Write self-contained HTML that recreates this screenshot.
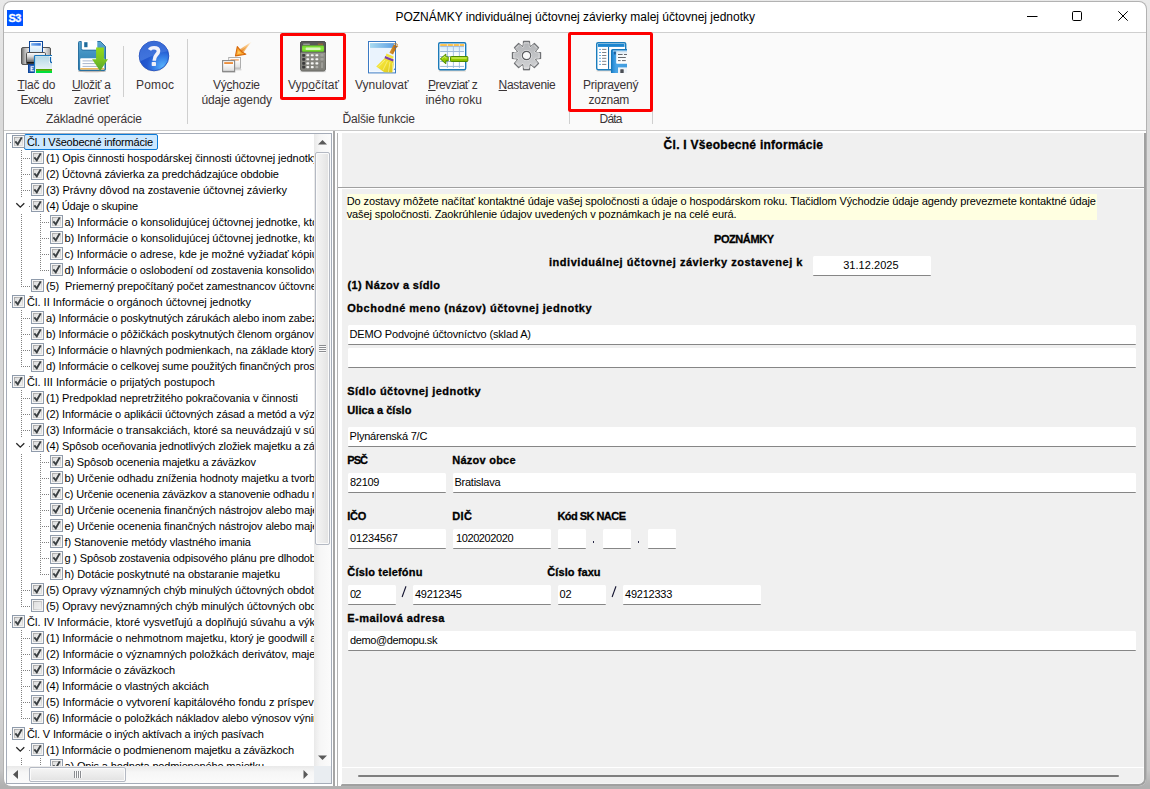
<!DOCTYPE html>
<html><head><meta charset="utf-8"><title>POZNÁMKY</title>
<style>
html,body{margin:0;padding:0;}
body{width:1150px;height:789px;overflow:hidden;background:linear-gradient(180deg,#e9e9e9 0px,#dadada 120px,#d6d6d6 700px,#c6c6c6 770px,#b0b0b0 786px,#b0b0b0 789px);position:relative;font-family:"Liberation Sans",sans-serif;}
.t{position:absolute;white-space:pre;font-family:"Liberation Sans",sans-serif;}
.a{position:absolute;}
u{text-decoration:underline;text-underline-offset:1px;text-decoration-thickness:1px;}
.inp{position:absolute;background:#fff;border-bottom:1px solid #868686;box-sizing:border-box;border-radius:1.5px 1.5px 1px 1px;}
.cb{position:absolute;width:13px;height:13px;box-sizing:border-box;border:1px solid #8f9bab;background:#f6f6f6;}
.cb::before{content:"";position:absolute;left:1px;top:1px;width:9px;height:9px;background:linear-gradient(135deg,#a6a6a6 0%,#c4c4c4 45%,#e6e6e6 100%);}
.cb::after{content:"";position:absolute;left:2px;top:2px;width:7px;height:7px;background:linear-gradient(135deg,#e0e0e0 0%,#efefef 100%);}
.cb svg{position:absolute;left:0px;top:0px;z-index:2;}
.hd{position:absolute;height:1px;background-image:linear-gradient(90deg,#808080 50%,transparent 50%);background-size:2px 1px;}
.vd{position:absolute;width:1px;background-image:linear-gradient(180deg,#808080 50%,transparent 50%);background-size:1px 2px;}
</style></head><body>
<div class="a" style="left:4px;top:2px;width:1142px;height:784px;background:#fff;border-radius:7px;box-shadow:0 0 0 1px #b2b2b2;" id="win"></div>
<div class="a" style="left:4px;top:32px;width:1142px;height:1px;background:#cfcfcf"></div>
<div class="a" style="left:4px;top:33px;width:1142px;height:97px;background:#fafafa"></div>
<div class="a" style="left:4px;top:130px;width:1142px;height:1px;background:#c9c9c9"></div>
<div class="a" style="left:7px;top:10px;width:16px;height:16px;background:#0054ff"></div>
<div id="s3" class="t" style="left:8.6px;top:10.69px;font-size:11px;line-height:15px;font-weight:bold;-webkit-text-stroke:0.3px currentColor;color:#fff;letter-spacing:-0.669px;">S3</div>
<div id="title" class="t" style="left:395.4px;top:9.34px;font-size:12px;line-height:17px;color:#000;letter-spacing:-0.006px;">POZNÁMKY individuálnej účtovnej závierky malej účtovnej jednotky</div>
<svg class="a" style="left:1020px;top:5px" width="120" height="24" viewBox="0 0 120 24">
<path d="M7 11.5H17.5" stroke="#000" stroke-width="1" fill="none"/>
<rect x="52.5" y="6.5" width="9" height="9" rx="1.2" stroke="#000" stroke-width="1" fill="none"/>
<path d="M98.3 6.3L107.7 15.7M107.7 6.3L98.3 15.7" stroke="#000" stroke-width="1" fill="none"/>
</svg>
<div id="r1a" class="t" style="left:17.5px;top:77.34px;font-size:12px;line-height:17px;color:#3a3436;letter-spacing:-0.229px;"><u>T</u>lač do</div>
<div id="r1b" class="t" style="left:20.5px;top:92.34px;font-size:12px;line-height:17px;color:#3a3436;letter-spacing:-0.706px;">Excelu</div>
<div id="r2a" class="t" style="left:72px;top:77.34px;font-size:12px;line-height:17px;color:#3a3436;letter-spacing:-0.312px;"><u>U</u>ložiť a</div>
<div id="r2b" class="t" style="left:74px;top:92.34px;font-size:12px;line-height:17px;color:#3a3436;letter-spacing:-0.086px;">zavrieť</div>
<div id="r3a" class="t" style="left:136px;top:77.34px;font-size:12px;line-height:17px;color:#3a3436;letter-spacing:0.160px;">Pomoc</div>
<div id="g1" class="t" style="left:46px;top:111.34px;font-size:12px;line-height:17px;color:#3a3436;letter-spacing:-0.171px;">Základné operácie</div>
<div id="r4a" class="t" style="left:213px;top:77.34px;font-size:12px;line-height:17px;color:#3a3436;letter-spacing:-0.243px;">Vý<u>c</u>hozie</div>
<div id="r4b" class="t" style="left:201.4px;top:92.34px;font-size:12px;line-height:17px;color:#3a3436;letter-spacing:-0.134px;">údaje agendy</div>
<div id="r5a" class="t" style="left:288px;top:77.34px;font-size:12px;line-height:17px;color:#3a3436;letter-spacing:0.029px;">Vyp<u>o</u>čítať</div>
<div id="r6a" class="t" style="left:355px;top:77.34px;font-size:12px;line-height:17px;color:#3a3436;letter-spacing:-0.003px;">Vynulovať</div>
<div id="g2" class="t" style="left:342.4px;top:111.34px;font-size:12px;line-height:17px;color:#3a3436;letter-spacing:-0.162px;">Ďalšie funkcie</div>
<div id="r7a" class="t" style="left:428px;top:77.34px;font-size:12px;line-height:17px;color:#3a3436;letter-spacing:-0.451px;"><u>P</u>revziať z</div>
<div id="r7b" class="t" style="left:425.4px;top:92.34px;font-size:12px;line-height:17px;color:#3a3436;letter-spacing:0.050px;">iného roku</div>
<div id="r8a" class="t" style="left:498.6px;top:77.34px;font-size:12px;line-height:17px;color:#3a3436;letter-spacing:-0.316px;"><u>N</u>astavenie</div>
<div id="r9a" class="t" style="left:583px;top:77.34px;font-size:12px;line-height:17px;color:#3a3436;letter-spacing:-0.219px;">Pripra<u>v</u>ený</div>
<div id="r9b" class="t" style="left:588.6px;top:92.34px;font-size:12px;line-height:17px;color:#3a3436;letter-spacing:-0.266px;">zoznam</div>
<div id="g3" class="t" style="left:599.5px;top:111.34px;font-size:12px;line-height:17px;color:#3a3436;letter-spacing:-0.786px;">Dáta</div>
<div class="a" style="left:123px;top:46px;width:1px;height:51px;background:#cfcfcf"></div>
<div class="a" style="left:187px;top:39px;width:1px;height:85px;background:#cfcfcf"></div>
<div class="a" style="left:569px;top:39px;width:1px;height:85px;background:#cfcfcf"></div>
<div class="a" style="left:652px;top:39px;width:1px;height:85px;background:#cfcfcf"></div>
<div class="a" style="left:280px;top:33px;width:66px;height:67px;box-sizing:border-box;border:3px solid #fd0000;border-radius:2.5px"></div>
<div class="a" style="left:568px;top:32.4px;width:85.2px;height:79.3px;box-sizing:border-box;border:3px solid #fd0000;border-radius:2.5px"></div>
<svg class="a" style="left:20px;top:40px" width="32" height="33" viewBox="0 0 32 33"><defs>
<linearGradient id="pb" x1="0" x2="1" y1="0" y2="0"><stop offset="0" stop-color="#6a6a6a"/><stop offset=".12" stop-color="#b8b8b8"/><stop offset=".3" stop-color="#f4f4f4"/><stop offset=".75" stop-color="#f8f8f8"/><stop offset="1" stop-color="#a0a0a0"/></linearGradient>
<linearGradient id="pt" x1="0" x2="0" y1="0" y2="1"><stop offset="0" stop-color="#ffffff"/><stop offset=".35" stop-color="#d8d8d8"/><stop offset=".8" stop-color="#6e6e6e"/><stop offset=".81" stop-color="#111"/><stop offset="1" stop-color="#222"/></linearGradient>
<linearGradient id="pp" x1="0" x2="0" y1="0" y2="1"><stop offset="0" stop-color="#ffffff"/><stop offset="1" stop-color="#cfe6f6"/></linearGradient>
<linearGradient id="pbar" x1="0" x2="1" y1="0" y2="0"><stop offset="0" stop-color="#7ab0f0"/><stop offset="1" stop-color="#2f6fd8"/></linearGradient>
<linearGradient id="pd" x1="0" x2="0" y1="0" y2="1"><stop offset="0" stop-color="#b4d8e6"/><stop offset="1" stop-color="#e6f1f7"/></linearGradient>
</defs>
<rect x="1.5" y="7.5" width="29" height="17" rx="1.5" fill="url(#pb)" stroke="#555" stroke-width="1"/>
<rect x="9.5" y="1.5" width="13" height="12" fill="url(#pp)" stroke="#0b469a" stroke-width="1"/>
<rect x="11.2" y="3.1" width="9.6" height="2.6" fill="url(#pbar)"/>
<rect x="6.5" y="12.5" width="19" height="11.5" rx="1.2" fill="url(#pt)" stroke="#505050" stroke-width="1"/>
<rect x="8.5" y="24.5" width="7" height="8" fill="#2f5fb4" stroke="#0b469a" stroke-width="1"/>
<path d="M10.8 26.7h3.2M10.8 28.7h2.6M10.8 30.7h3.2M11.1 26.2v5" stroke="#fff" stroke-width="1.1" fill="none"/>
<rect x="14" y="15" width="19" height="18" fill="#fff"/>
<rect x="15" y="16.2" width="18" height="13" fill="url(#pd)"/>
<path d="M14.5 33V16.3Q14.5 15.5 15.3 15.5H33" stroke="#1b79bf" stroke-width="1.2" fill="none"/>
<rect x="16" y="29" width="17" height="1.9" fill="#4fa600"/>
<rect x="16" y="30.9" width="17" height="2.1" fill="#00df3c"/>
<rect x="29.2" y="16.2" width="3.8" height="7" fill="#fff"/>
<path d="M30.5 17v4.2q0 1.3 1.4 1.3H33" stroke="#0d63b0" stroke-width="1.3" fill="none"/>
</svg>
<svg class="a" style="left:76px;top:40px" width="34" height="34" viewBox="0 0 34 34"><defs>
<linearGradient id="sb" x1="0" x2="0" y1="0" y2="1"><stop offset="0" stop-color="#5aa6d2"/><stop offset=".45" stop-color="#3f90c0"/><stop offset="1" stop-color="#2f7cae"/></linearGradient>
<linearGradient id="sg" x1="0" x2="0" y1="0" y2="1"><stop offset="0" stop-color="#95da18"/><stop offset=".5" stop-color="#7cc522"/><stop offset="1" stop-color="#54a42e"/></linearGradient>
<filter id="sbl" x="-20%" y="-100%" width="140%" height="300%"><feGaussianBlur stdDeviation="0.7"/></filter>
</defs>
<ellipse cx="16" cy="31.4" rx="14" ry="0.9" fill="#8a8078" opacity=".55" filter="url(#sbl)"/>
<path d="M3.5 1.5H24.5L29.5 6.5V29.5Q29.5 30.5 28.5 30.5H3.5Q2.5 30.5 2.5 29.5V2.5Q2.5 1.5 3.5 1.5Z" fill="url(#sb)" stroke="#2a709f" stroke-width="1"/>
<path d="M5.6 1V8.2Q5.6 9.7 7.1 9.7H21.3V1Z" fill="#fff"/>
<path d="M5.2 2V8.4Q5.2 10.3 7.1 10.3H21.5" stroke="#2b75a6" stroke-width="1" fill="none" opacity=".9"/>
<rect x="8.2" y="2.2" width="3.3" height="5" fill="#1f6b9c"/>
<rect x="4.2" y="18.3" width="24.2" height="11.2" rx="1" fill="#fff"/>
<rect x="4.2" y="28" width="24.2" height="1.6" fill="#f0b860"/>
<path d="M6.5 20.9H19M6.5 23.6H21M6.5 26.4H23" stroke="#a9b6cc" stroke-width="1"/>
<path d="M20.1 7.4H27.9V19.2H32L24.1 31L16.1 19.2H20.1Z" fill="url(#sg)"/>
</svg>
<svg class="a" style="left:138px;top:40px" width="34" height="34" viewBox="0 0 34 34"><defs>
<radialGradient id="hg" cx="0.80" cy="0.85" r="0.9"><stop offset="0" stop-color="#5ab2fa"/><stop offset=".3" stop-color="#3a86ea"/><stop offset=".6" stop-color="#2459d0"/><stop offset="1" stop-color="#1d4fc8"/></radialGradient>
<linearGradient id="hh" x1="0" x2="0" y1="0" y2="1"><stop offset="0" stop-color="#3d6fd8"/><stop offset="1" stop-color="#4a7ee2"/></linearGradient>
<clipPath id="hc"><circle cx="16" cy="16" r="14.4"/></clipPath>
</defs>
<circle cx="16" cy="16.7" r="15" fill="#c8b898" opacity=".35"/>
<circle cx="16" cy="16" r="14.8" fill="url(#hg)" stroke="#2450c0" stroke-width=".9"/>
<path d="M0 0H34V10.5Q20 12 4 20.5L0 22.5Z" fill="url(#hh)" opacity=".8" clip-path="url(#hc)"/>
<path d="M11.5 9.8Q12.7 7.7 16 7.7Q20.5 7.7 20.5 11Q20.5 12.8 18.6 14.6Q16.3 16.8 16.2 20.7" stroke="#f2f2fa" stroke-width="3.6" fill="none" stroke-linecap="butt"/>
<rect x="13.7" y="22" width="4.3" height="3.9" rx=".7" fill="#f0f0f8"/>
</svg>
<svg class="a" style="left:220px;top:40px" width="34" height="34" viewBox="0 0 34 34"><defs>
<linearGradient id="vw" x1="0" x2="0" y1="0" y2="1"><stop offset="0" stop-color="#ffffff"/><stop offset=".35" stop-color="#fafafa"/><stop offset="1" stop-color="#dcdcdc"/></linearGradient>
<linearGradient id="va" gradientUnits="userSpaceOnUse" x1="31" y1="2.4" x2="21" y2="11"><stop offset="0" stop-color="#ffd9a0" stop-opacity="0"/><stop offset=".18" stop-color="#f9b45a" stop-opacity=".7"/><stop offset=".6" stop-color="#f29a30" stop-opacity="1"/><stop offset="1" stop-color="#e27a10"/></linearGradient>
<filter id="vbl"><feGaussianBlur stdDeviation="0.6"/></filter>
</defs>
<rect x="8.8" y="29" width="12.6" height="1.4" fill="#bbb" opacity=".6" filter="url(#vbl)"/>
<rect x="8.7" y="17.5" width="11.8" height="10.7" fill="url(#vw)" stroke="#aeaeae" stroke-width="1"/>
<rect x="10.4" y="19" width="8.4" height="1.8" fill="#f2b98a"/>
<rect x="2.3" y="31.5" width="13" height="1.4" fill="#aaa" opacity=".6" filter="url(#vbl)"/>
<rect x="2.6" y="20.6" width="12" height="10.8" fill="url(#vw)" stroke="#868686" stroke-width="1.1"/>
<rect x="4.2" y="22.1" width="8.8" height="1.9" fill="#ec8f3e"/>
<path d="M19.2 9.4L30.9 2.3L23 13.2Z" fill="url(#va)" opacity=".55"/>
<path d="M20 10.2L30.9 2.3L22.4 12.6Z" fill="url(#va)"/>
<path d="M20.6 10.6L30.7 2.5M21.9 11.9L30.8 2.5" stroke="#fff0d6" stroke-width=".6" opacity=".7" fill="none"/>
<path d="M15.5 15.9L17.3 6.6L20.4 10.4L21.2 11.2L22 12L25.8 14.2Z" fill="#f9a930" stroke="#d8680a" stroke-width="1.1" stroke-linejoin="round"/>
<path d="M17.5 14L18.5 10.6L21.2 13.3Z" fill="#ffc861"/>
</svg>
<svg class="a" style="left:298px;top:40px" width="30" height="33" viewBox="0 0 30 33"><defs>
<linearGradient id="cb" x1="0" x2="0" y1="0" y2="1"><stop offset="0" stop-color="#96968f"/><stop offset="1" stop-color="#7e7e78"/></linearGradient>
<linearGradient id="cl" x1="0" x2="0" y1="0" y2="1"><stop offset="0" stop-color="#6fd62a"/><stop offset=".5" stop-color="#8cea3e"/><stop offset="1" stop-color="#66cc22"/></linearGradient>
</defs><rect x="2.4" y="31" width="25.4" height="1.2" fill="#999" opacity=".35"/><rect x="2.5" y="1.5" width="25" height="29.5" rx="2" fill="url(#cb)" stroke="#6b6b66" stroke-width="1"/><path d="M4.5 1.5H25.5Q27.5 1.5 27.5 3.5V12.2H2.5V3.5Q2.5 1.5 4.5 1.5Z" fill="#585858" stroke="#4c4c4c" stroke-width="1"/><rect x="5.2" y="3.7" width="6.6" height="1" fill="#c9c9c9" opacity=".8"/><rect x="19.8" y="3.7" width="5.2" height="1" fill="#b06a2a"/><rect x="4.1" y="5.6" width="21.8" height="6.2" rx=".8" fill="url(#cl)"/><rect x="7.7" y="7.4" width="14.8" height="2.7" rx=".6" fill="#dff7c8" opacity=".95"/><rect x="3" y="12.6" width="24" height=".8" fill="#b0b0aa" opacity=".7"/><rect x="4.2" y="13.9" width="2.9" height="2.8" rx=".8" fill="#3a3a3a"/><rect x="8.299999999999999" y="14.200000000000001" width="2.9" height="2.1" rx=".7" fill="#f4f4f2" opacity="1"/><rect x="12.799999999999999" y="14.200000000000001" width="2.9" height="2.1" rx=".7" fill="#f4f4f2" opacity="1"/><rect x="17.400000000000002" y="14.200000000000001" width="2.9" height="2.1" rx=".7" fill="#f4f4f2" opacity="1"/><rect x="4.2" y="17.900000000000002" width="2.9" height="2.8" rx=".8" fill="#3a3a3a"/><rect x="8.299999999999999" y="18.2" width="2.9" height="2.1" rx=".7" fill="#f4f4f2" opacity="1"/><rect x="12.799999999999999" y="18.2" width="2.9" height="2.1" rx=".7" fill="#f4f4f2" opacity="1"/><rect x="17.400000000000002" y="18.2" width="2.9" height="2.1" rx=".7" fill="#f4f4f2" opacity="1"/><rect x="4.2" y="22.0" width="2.9" height="2.8" rx=".8" fill="#3a3a3a"/><rect x="8.299999999999999" y="22.299999999999997" width="2.9" height="2.1" rx=".7" fill="#f4f4f2" opacity="1"/><rect x="12.799999999999999" y="22.299999999999997" width="2.9" height="2.1" rx=".7" fill="#f4f4f2" opacity="1"/><rect x="17.400000000000002" y="22.299999999999997" width="2.9" height="2.1" rx=".7" fill="#f4f4f2" opacity="1"/><rect x="4.2" y="25.8" width="2.9" height="2.8" rx=".8" fill="#3a3a3a"/><rect x="8.299999999999999" y="26.099999999999998" width="2.9" height="2.1" rx=".7" fill="#f4f4f2" opacity="1"/><rect x="12.799999999999999" y="26.099999999999998" width="2.9" height="2.1" rx=".7" fill="#f4f4f2" opacity="1"/><rect x="17.400000000000002" y="26.099999999999998" width="2.9" height="2.1" rx=".7" fill="#f4f4f2" opacity="0.35"/><rect x="22.4" y="14.1" width="3.2" height="2.3" rx=".6" fill="#a2a29c"/><rect x="22.4" y="18.1" width="3.2" height="2.3" rx=".6" fill="#a2a29c"/><rect x="22.5" y="22" width="3.1" height="6.6" rx=".7" fill="#9c9c96" stroke="#74746e" stroke-width=".5"/></svg>
<svg class="a" style="left:366px;top:40px" width="34" height="34" viewBox="0 0 34 34"><defs>
<linearGradient id="bw" x1="0" x2="1" y1="0" y2="0"><stop offset="0" stop-color="#a9daf0"/><stop offset="1" stop-color="#5f9fe2"/></linearGradient>
<linearGradient id="by" x1="0" x2="1" y1="0" y2="1"><stop offset="0" stop-color="#f7ec5a"/><stop offset=".5" stop-color="#f0de2e"/><stop offset="1" stop-color="#d8c31c"/></linearGradient>
<linearGradient id="bh" x1="0" x2="1" y1="0" y2="0"><stop offset="0" stop-color="#d99a3a"/><stop offset=".5" stop-color="#c77d1a"/><stop offset="1" stop-color="#a5600e"/></linearGradient>
</defs>
<rect x="2.5" y="1.5" width="27" height="31.4" fill="#fff" stroke="#3b7ac4" stroke-width="1"/>
<rect x="4" y="3" width="24.1" height="28.5" fill="#eaf3fd"/>
<rect x="4" y="3.1" width="24.2" height="4.8" fill="url(#bw)"/>
<path d="M29.5 18v10l-1.5 2" stroke="#3b7ac4" stroke-width="1" fill="none"/>
<path d="M27.8 4.4L31.2 6.3L27 14.6L23.4 12.8Z" fill="url(#bh)"/>
<path d="M28 4.2l.9-.7 1 .6.9-.3.6 1-.3.9.5.8-.7.8" stroke="#b8741c" stroke-width=".9" fill="none"/>
<circle cx="29.4" cy="7.4" r=".7" fill="#3a6ac8"/>
<path d="M20.6 13.6L27.6 16.6L27 19L19.6 16Z" fill="#f3e440"/>
<path d="M19.2 17.4L27.4 20.6L27.6 24.4L26.4 32.6L18.2 32.2L10.2 26.4Z" fill="url(#by)"/>
<path d="M19 20l-6.5 6.8M21.4 21l-4.4 9M24 22l-1.6 10M26.4 23l.2 9" stroke="#fbf6a0" stroke-width=".8" fill="none" opacity=".8"/>
<path d="M19.1 15.9L27.7 19.4L27 21.6L18.6 18.2Z" fill="#7b3fa4"/>
</svg>
<svg class="a" style="left:436px;top:40px" width="34" height="34" viewBox="0 0 34 34"><defs>
<linearGradient id="tc" x1="0" x2="0" y1="0" y2="1"><stop offset="0" stop-color="#cfe9fb"/><stop offset=".6" stop-color="#f2f9fe"/><stop offset="1" stop-color="#ffffff"/></linearGradient>
<linearGradient id="tg" x1="0" x2="0" y1="0" y2="1"><stop offset="0" stop-color="#b4e02a"/><stop offset=".45" stop-color="#9ad000"/><stop offset="1" stop-color="#82b800"/></linearGradient>
<filter id="tbl"><feGaussianBlur stdDeviation="0.7"/></filter>
</defs>
<rect x="2.8" y="30.2" width="27" height="1.3" fill="#b9a999" opacity=".5" filter="url(#tbl)"/>
<rect x="2.7" y="2.7" width="27" height="27" rx="1.4" fill="#fff" stroke="#1b7ab9" stroke-width="1.4"/>
<rect x="4.2" y="6.4" width="24" height="10" fill="url(#tc)"/>
<rect x="4.2" y="4.1" width="24" height="1.9" fill="#ffbf3f"/>
<path d="M11.4 4V28M17.4 4V28M23.4 4V28" stroke="#a9c4e4" stroke-width="1"/>
<path d="M4.2 6.4H28M4.2 11.5H28M4.2 16.5H28M4.2 21.5H28M4.2 26.4H28" stroke="#9db9dc" stroke-width="1"/>
<path d="M11.4 4V6M17.4 4V6M23.4 4V6" stroke="#ffe7b0" stroke-width="1"/>
<rect x="14.5" y="16.5" width="17.3" height="5" rx=".8" fill="url(#tg)" stroke="#4f8a00" stroke-width="1"/>
<rect x="15.6" y="17.5" width="15" height="1.2" fill="#d6f070" opacity=".8"/>
<path d="M4.3 18.9L9.8 14.1V16.9H12.2V20.9H9.8V23.8Z" fill="url(#tg)" stroke="#4f8a00" stroke-width="1" stroke-linejoin="miter"/>
<path d="M5.9 18.7L9 16.1V17.8H11.5" stroke="#d6f070" stroke-width=".8" fill="none" opacity=".9"/>
</svg>
<svg class="a" style="left:510px;top:40px" width="34" height="34" viewBox="0 0 34 34"><defs>
<linearGradient id="gg" x1="0" x2="0" y1="0" y2="1"><stop offset="0" stop-color="#b0b2b5"/><stop offset="1" stop-color="#d2d3d5"/></linearGradient>
<filter id="gbl"><feGaussianBlur stdDeviation="0.5"/></filter>
</defs>
<path d="M13.26 5.83L13.52 1.41L19.48 1.41L19.74 5.83L21.05 6.37L24.36 3.43L28.57 7.64L25.63 10.95L26.17 12.26L30.59 12.52L30.59 18.48L26.17 18.74L25.63 20.05L28.57 23.36L24.36 27.57L21.05 24.63L19.74 25.17L19.48 29.59L13.52 29.59L13.26 25.17L11.95 24.63L8.64 27.57L4.43 23.36L7.37 20.05L6.83 18.74L2.41 18.48L2.41 12.52L6.83 12.26L7.37 10.95L4.43 7.64L8.64 3.43L11.95 6.37Z" fill="#888" opacity=".35" transform="translate(0,.8)" filter="url(#gbl)"/>
<path d="M13.26 5.83L13.52 1.41L19.48 1.41L19.74 5.83L21.05 6.37L24.36 3.43L28.57 7.64L25.63 10.95L26.17 12.26L30.59 12.52L30.59 18.48L26.17 18.74L25.63 20.05L28.57 23.36L24.36 27.57L21.05 24.63L19.74 25.17L19.48 29.59L13.52 29.59L13.26 25.17L11.95 24.63L8.64 27.57L4.43 23.36L7.37 20.05L6.83 18.74L2.41 18.48L2.41 12.52L6.83 12.26L7.37 10.95L4.43 7.64L8.64 3.43L11.95 6.37Z" fill="url(#gg)" stroke="#707275" stroke-width="1.2" stroke-linejoin="round"/>
<path d="M13.26 5.83L13.52 1.41L19.48 1.41L19.74 5.83L21.05 6.37L24.36 3.43L28.57 7.64L25.63 10.95L26.17 12.26L30.59 12.52L30.59 18.48L26.17 18.74L25.63 20.05L28.57 23.36L24.36 27.57L21.05 24.63L19.74 25.17L19.48 29.59L13.52 29.59L13.26 25.17L11.95 24.63L8.64 27.57L4.43 23.36L7.37 20.05L6.83 18.74L2.41 18.48L2.41 12.52L6.83 12.26L7.37 10.95L4.43 7.64L8.64 3.43L11.95 6.37Z" fill="none" stroke="#eceded" stroke-width=".8" stroke-linejoin="round" transform="translate(16.5,15.5) scale(.89) translate(-16.5,-15.5)" opacity=".85"/>
<circle cx="16.5" cy="15.5" r="5.4" fill="#ececed"/>
<circle cx="16.5" cy="15.5" r="4.2" fill="#f8f8f8" stroke="#5b5d60" stroke-width="1.2"/>
</svg>
<svg class="a" style="left:594px;top:40px" width="34" height="34" viewBox="0 0 34 34"><defs>
<linearGradient id="zf" x1="0" x2="1" y1="0" y2="0"><stop offset="0" stop-color="#1f86d4"/><stop offset=".25" stop-color="#4aa4e4"/><stop offset="1" stop-color="#3d9ade"/></linearGradient>
<linearGradient id="zp" x1="0" x2="0" y1="0" y2="1"><stop offset="0" stop-color="#d9e6f0"/><stop offset=".3" stop-color="#f4f8fb"/><stop offset="1" stop-color="#ffffff"/></linearGradient>
<filter id="zbl"><feGaussianBlur stdDeviation="0.6"/></filter>
<clipPath id="zc"><rect x="0" y="0" width="33" height="33"/></clipPath>
</defs>
<rect x="2.6" y="30.2" width="18" height="1.2" fill="#b9a999" opacity=".5" filter="url(#zbl)"/>
<rect x="2.7" y="2.7" width="29" height="27" rx="1.4" fill="#fff" stroke="#1a7dbd" stroke-width="1.4"/>
<rect x="3.9" y="3.9" width="26.6" height="3" fill="#1c86d0"/>
<rect x="14" y="6.9" width="1.1" height="22" fill="#1a6fae"/>
<rect x="5.1" y="8.9" width="1.9" height="1" fill="#5aa8e4"/><rect x="8.1" y="8.9" width="4.2" height="1" fill="#7d8289"/><rect x="5.1" y="12.0" width="1.9" height="1" fill="#5aa8e4"/><rect x="8.1" y="12.0" width="4.2" height="1" fill="#7d8289"/><rect x="5.1" y="15.0" width="1.9" height="1" fill="#5aa8e4"/><rect x="8.1" y="15.0" width="4.2" height="1" fill="#7d8289"/><rect x="5.1" y="17.8" width="1.9" height="1" fill="#5aa8e4"/><rect x="8.1" y="17.8" width="4.2" height="1" fill="#7d8289"/><rect x="5.1" y="20.8" width="1.9" height="1" fill="#5aa8e4"/><rect x="8.1" y="20.8" width="4.2" height="1" fill="#7d8289"/><rect x="5.1" y="23.9" width="1.9" height="1" fill="#5aa8e4"/><rect x="8.1" y="23.9" width="4.2" height="1" fill="#7d8289"/>
<g clip-path="url(#zc)">
<rect x="17.6" y="9.6" width="18" height="26" rx="1.2" fill="url(#zf)" stroke="#1878ba" stroke-width="1.3"/>
<rect x="19" y="10.6" width="15" height=".9" fill="#d9ecfa" opacity=".9"/>
<rect x="20.2" y="11.6" width="1.5" height="2.8" fill="#0d3f78" opacity=".8"/>
<rect x="22.2" y="11.2" width="12" height="12.5" rx=".8" fill="url(#zp)"/>
<path d="M24 14.5h4.6M30 14.5h3M24 17.5h7.8M24 20.6h2.6M28 20.6h3.8" stroke="#55575c" stroke-width=".9"/>
<rect x="24" y="27.4" width="10" height="6" fill="#eef3f8"/>
<rect x="26.3" y="29.2" width="3.4" height="4" rx=".6" fill="#4a4e55"/>
</g>
</svg>
<div class="a" style="left:6px;top:133px;width:326px;height:651px;box-sizing:border-box;border:1px solid #a5acb8;background:#fff" id="tree"></div>
<div class="a" style="left:6px;top:134px;width:308px;height:632px;overflow:hidden;clip-path:inset(0 0 0 1px)">
<div class="a" style="left:18px;top:0px;width:134px;height:16px;box-sizing:border-box;background:#cce8ff;border:1px solid #0a7ad8;border-radius:2px"></div>
<div class="hd" style="left:4px;top:8px;width:1px"></div>
<div class="cb" style="left:6px;top:1px"><svg width="11" height="11" viewBox="0 0 11 11"><path d="M2.3 5.4L4.8 8.3L8.7 1.4" stroke="#3b4043" stroke-width="1.9" fill="none" stroke-linejoin="miter"/></svg></div>
<div id="tr0" class="t" style="left:21px;top:0.69px;font-size:11px;line-height:15px;color:#000;letter-spacing:-0.218px;">Čl. I Všeobecné informácie</div>
<div class="hd" style="left:17px;top:24px;width:7px"></div>
<div class="cb" style="left:25px;top:17px"><svg width="11" height="11" viewBox="0 0 11 11"><path d="M2.3 5.4L4.8 8.3L8.7 1.4" stroke="#3b4043" stroke-width="1.9" fill="none" stroke-linejoin="miter"/></svg></div>
<div id="tr1" class="t" style="left:40px;top:16.69px;font-size:11px;line-height:15px;color:#000;letter-spacing:-0.067px;"><span id="tr1_p">(1) Opis činnosti hospodárskej činnosti účtovnej jednotk</span>y</div>
<div class="hd" style="left:17px;top:40px;width:7px"></div>
<div class="cb" style="left:25px;top:33px"><svg width="11" height="11" viewBox="0 0 11 11"><path d="M2.3 5.4L4.8 8.3L8.7 1.4" stroke="#3b4043" stroke-width="1.9" fill="none" stroke-linejoin="miter"/></svg></div>
<div id="tr2" class="t" style="left:40px;top:32.69px;font-size:11px;line-height:15px;color:#000;letter-spacing:-0.122px;">(2) Účtovná závierka za predchádzajúce obdobie</div>
<div class="hd" style="left:17px;top:56px;width:7px"></div>
<div class="cb" style="left:25px;top:49px"><svg width="11" height="11" viewBox="0 0 11 11"><path d="M2.3 5.4L4.8 8.3L8.7 1.4" stroke="#3b4043" stroke-width="1.9" fill="none" stroke-linejoin="miter"/></svg></div>
<div id="tr3" class="t" style="left:40px;top:48.69px;font-size:11px;line-height:15px;color:#000;letter-spacing:-0.024px;">(3) Právny dôvod na zostavenie účtovnej závierky</div>
<div class="hd" style="left:23px;top:72px;width:1px"></div>
<svg class="a" style="left:9px;top:67px" width="11" height="9" viewBox="0 0 11 9"><path d="M1.3 2.2L5.3 6.2L9.3 2.2" stroke="#262626" stroke-width="1.3" fill="none"/></svg>
<div class="cb" style="left:25px;top:65px"><svg width="11" height="11" viewBox="0 0 11 11"><path d="M2.3 5.4L4.8 8.3L8.7 1.4" stroke="#3b4043" stroke-width="1.9" fill="none" stroke-linejoin="miter"/></svg></div>
<div id="tr4" class="t" style="left:40px;top:64.69px;font-size:11px;line-height:15px;color:#000;letter-spacing:-0.188px;">(4) Údaje o skupine</div>
<div class="hd" style="left:36px;top:88px;width:7px"></div>
<div class="cb" style="left:44px;top:81px"><svg width="11" height="11" viewBox="0 0 11 11"><path d="M2.3 5.4L4.8 8.3L8.7 1.4" stroke="#3b4043" stroke-width="1.9" fill="none" stroke-linejoin="miter"/></svg></div>
<div id="tr5" class="t" style="left:58.5px;top:80.69px;font-size:11px;line-height:15px;color:#000;letter-spacing:-0.024px;"><span id="tr5_p">a) Informácie o konsolidujúcej účtovnej jednotke,</span> ktorá</div>
<div class="hd" style="left:36px;top:104px;width:7px"></div>
<div class="cb" style="left:44px;top:97px"><svg width="11" height="11" viewBox="0 0 11 11"><path d="M2.3 5.4L4.8 8.3L8.7 1.4" stroke="#3b4043" stroke-width="1.9" fill="none" stroke-linejoin="miter"/></svg></div>
<div id="tr6" class="t" style="left:58.5px;top:96.69px;font-size:11px;line-height:15px;color:#000;letter-spacing:-0.024px;"><span id="tr6_p">b) Informácie o konsolidujúcej účtovnej jednotke,</span> ktorá</div>
<div class="hd" style="left:36px;top:120px;width:7px"></div>
<div class="cb" style="left:44px;top:113px"><svg width="11" height="11" viewBox="0 0 11 11"><path d="M2.3 5.4L4.8 8.3L8.7 1.4" stroke="#3b4043" stroke-width="1.9" fill="none" stroke-linejoin="miter"/></svg></div>
<div id="tr7" class="t" style="left:58.5px;top:112.69px;font-size:11px;line-height:15px;color:#000;letter-spacing:-0.031px;"><span id="tr7_p">c) Informácie o adrese, kde je možné vyžiadať</span> kópiu</div>
<div class="hd" style="left:36px;top:136px;width:7px"></div>
<div class="cb" style="left:44px;top:129px"><svg width="11" height="11" viewBox="0 0 11 11"><path d="M2.3 5.4L4.8 8.3L8.7 1.4" stroke="#3b4043" stroke-width="1.9" fill="none" stroke-linejoin="miter"/></svg></div>
<div id="tr8" class="t" style="left:58.5px;top:128.69px;font-size:11px;line-height:15px;color:#000;letter-spacing:-0.069px;"><span id="tr8_p">d) Informácie o oslobodení od zostavenia</span> konsolidovanej</div>
<div class="hd" style="left:17px;top:152px;width:7px"></div>
<div class="cb" style="left:25px;top:145px"><svg width="11" height="11" viewBox="0 0 11 11"><path d="M2.3 5.4L4.8 8.3L8.7 1.4" stroke="#3b4043" stroke-width="1.9" fill="none" stroke-linejoin="miter"/></svg></div>
<div id="tr9" class="t" style="left:40px;top:144.69px;font-size:11px;line-height:15px;color:#000;letter-spacing:-0.095px;"><span id="tr9_p">(5)  Priemerný prepočítaný počet zamestnancov</span> účtovnej</div>
<div class="hd" style="left:4px;top:168px;width:1px"></div>
<div class="cb" style="left:6px;top:161px"><svg width="11" height="11" viewBox="0 0 11 11"><path d="M2.3 5.4L4.8 8.3L8.7 1.4" stroke="#3b4043" stroke-width="1.9" fill="none" stroke-linejoin="miter"/></svg></div>
<div id="tr10" class="t" style="left:21px;top:160.69px;font-size:11px;line-height:15px;color:#000;letter-spacing:0.018px;">Čl. II Informácie o orgánoch účtovnej jednotky</div>
<div class="hd" style="left:17px;top:184px;width:7px"></div>
<div class="cb" style="left:25px;top:177px"><svg width="11" height="11" viewBox="0 0 11 11"><path d="M2.3 5.4L4.8 8.3L8.7 1.4" stroke="#3b4043" stroke-width="1.9" fill="none" stroke-linejoin="miter"/></svg></div>
<div id="tr11" class="t" style="left:40px;top:176.69px;font-size:11px;line-height:15px;color:#000;letter-spacing:-0.119px;"><span id="tr11_p">a) Informácie o poskytnutých zárukách alebo inom</span> zabezpečení</div>
<div class="hd" style="left:17px;top:200px;width:7px"></div>
<div class="cb" style="left:25px;top:193px"><svg width="11" height="11" viewBox="0 0 11 11"><path d="M2.3 5.4L4.8 8.3L8.7 1.4" stroke="#3b4043" stroke-width="1.9" fill="none" stroke-linejoin="miter"/></svg></div>
<div id="tr12" class="t" style="left:40px;top:192.69px;font-size:11px;line-height:15px;color:#000;letter-spacing:-0.116px;"><span id="tr12_p">b) Informácie o pôžičkách poskytnutých členom</span> orgánov</div>
<div class="hd" style="left:17px;top:216px;width:7px"></div>
<div class="cb" style="left:25px;top:209px"><svg width="11" height="11" viewBox="0 0 11 11"><path d="M2.3 5.4L4.8 8.3L8.7 1.4" stroke="#3b4043" stroke-width="1.9" fill="none" stroke-linejoin="miter"/></svg></div>
<div id="tr13" class="t" style="left:40px;top:208.69px;font-size:11px;line-height:15px;color:#000;letter-spacing:-0.106px;"><span id="tr13_p">c) Informácie o hlavných podmienkach, na základe ktorý</span>ch</div>
<div class="hd" style="left:17px;top:232px;width:7px"></div>
<div class="cb" style="left:25px;top:225px"><svg width="11" height="11" viewBox="0 0 11 11"><path d="M2.3 5.4L4.8 8.3L8.7 1.4" stroke="#3b4043" stroke-width="1.9" fill="none" stroke-linejoin="miter"/></svg></div>
<div id="tr14" class="t" style="left:40px;top:224.69px;font-size:11px;line-height:15px;color:#000;letter-spacing:-0.129px;"><span id="tr14_p">d) Informácie o celkovej sume použitých finančných</span> prostriedkov</div>
<div class="hd" style="left:4px;top:248px;width:1px"></div>
<div class="cb" style="left:6px;top:241px"><svg width="11" height="11" viewBox="0 0 11 11"><path d="M2.3 5.4L4.8 8.3L8.7 1.4" stroke="#3b4043" stroke-width="1.9" fill="none" stroke-linejoin="miter"/></svg></div>
<div id="tr15" class="t" style="left:21px;top:240.69px;font-size:11px;line-height:15px;color:#000;letter-spacing:0.023px;">Čl. III Informácie o prijatých postupoch</div>
<div class="hd" style="left:17px;top:264px;width:7px"></div>
<div class="cb" style="left:25px;top:257px"><svg width="11" height="11" viewBox="0 0 11 11"><path d="M2.3 5.4L4.8 8.3L8.7 1.4" stroke="#3b4043" stroke-width="1.9" fill="none" stroke-linejoin="miter"/></svg></div>
<div id="tr16" class="t" style="left:40px;top:256.69px;font-size:11px;line-height:15px;color:#000;letter-spacing:-0.094px;">(1) Predpoklad nepretržitého pokračovania v činnosti</div>
<div class="hd" style="left:17px;top:280px;width:7px"></div>
<div class="cb" style="left:25px;top:273px"><svg width="11" height="11" viewBox="0 0 11 11"><path d="M2.3 5.4L4.8 8.3L8.7 1.4" stroke="#3b4043" stroke-width="1.9" fill="none" stroke-linejoin="miter"/></svg></div>
<div id="tr17" class="t" style="left:40px;top:272.69px;font-size:11px;line-height:15px;color:#000;letter-spacing:-0.123px;"><span id="tr17_p">(2) Informácie o aplikácii účtovných zásad a metód</span> a významných</div>
<div class="hd" style="left:17px;top:296px;width:7px"></div>
<div class="cb" style="left:25px;top:289px"><svg width="11" height="11" viewBox="0 0 11 11"><path d="M2.3 5.4L4.8 8.3L8.7 1.4" stroke="#3b4043" stroke-width="1.9" fill="none" stroke-linejoin="miter"/></svg></div>
<div id="tr18" class="t" style="left:40px;top:288.69px;font-size:11px;line-height:15px;color:#000;letter-spacing:-0.016px;"><span id="tr18_p">(3) Informácie o transakciách, ktoré sa neuvádzajú</span> v súvahe</div>
<div class="hd" style="left:23px;top:312px;width:1px"></div>
<svg class="a" style="left:9px;top:307px" width="11" height="9" viewBox="0 0 11 9"><path d="M1.3 2.2L5.3 6.2L9.3 2.2" stroke="#262626" stroke-width="1.3" fill="none"/></svg>
<div class="cb" style="left:25px;top:305px"><svg width="11" height="11" viewBox="0 0 11 11"><path d="M2.3 5.4L4.8 8.3L8.7 1.4" stroke="#3b4043" stroke-width="1.9" fill="none" stroke-linejoin="miter"/></svg></div>
<div id="tr19" class="t" style="left:40px;top:304.69px;font-size:11px;line-height:15px;color:#000;letter-spacing:-0.129px;"><span id="tr19_p">(4) Spôsob oceňovania jednotlivých zložiek majetku</span> a záväzkov</div>
<div class="hd" style="left:36px;top:328px;width:7px"></div>
<div class="cb" style="left:44px;top:321px"><svg width="11" height="11" viewBox="0 0 11 11"><path d="M2.3 5.4L4.8 8.3L8.7 1.4" stroke="#3b4043" stroke-width="1.9" fill="none" stroke-linejoin="miter"/></svg></div>
<div id="tr20" class="t" style="left:58.5px;top:320.69px;font-size:11px;line-height:15px;color:#000;letter-spacing:-0.167px;">a) Spôsob ocenenia majetku a záväzkov</div>
<div class="hd" style="left:36px;top:344px;width:7px"></div>
<div class="cb" style="left:44px;top:337px"><svg width="11" height="11" viewBox="0 0 11 11"><path d="M2.3 5.4L4.8 8.3L8.7 1.4" stroke="#3b4043" stroke-width="1.9" fill="none" stroke-linejoin="miter"/></svg></div>
<div id="tr21" class="t" style="left:58.5px;top:336.69px;font-size:11px;line-height:15px;color:#000;letter-spacing:-0.088px;"><span id="tr21_p">b) Určenie odhadu zníženia hodnoty majetku</span> a tvorby</div>
<div class="hd" style="left:36px;top:360px;width:7px"></div>
<div class="cb" style="left:44px;top:353px"><svg width="11" height="11" viewBox="0 0 11 11"><path d="M2.3 5.4L4.8 8.3L8.7 1.4" stroke="#3b4043" stroke-width="1.9" fill="none" stroke-linejoin="miter"/></svg></div>
<div id="tr22" class="t" style="left:58.5px;top:352.69px;font-size:11px;line-height:15px;color:#000;letter-spacing:-0.158px;"><span id="tr22_p">c) Určenie ocenenia záväzkov a stanovenie odhadu</span> rezerv</div>
<div class="hd" style="left:36px;top:376px;width:7px"></div>
<div class="cb" style="left:44px;top:369px"><svg width="11" height="11" viewBox="0 0 11 11"><path d="M2.3 5.4L4.8 8.3L8.7 1.4" stroke="#3b4043" stroke-width="1.9" fill="none" stroke-linejoin="miter"/></svg></div>
<div id="tr23" class="t" style="left:58.5px;top:368.69px;font-size:11px;line-height:15px;color:#000;letter-spacing:-0.095px;"><span id="tr23_p">d) Určenie ocenenia finančných nástrojov alebo</span> majetku</div>
<div class="hd" style="left:36px;top:392px;width:7px"></div>
<div class="cb" style="left:44px;top:385px"><svg width="11" height="11" viewBox="0 0 11 11"><path d="M2.3 5.4L4.8 8.3L8.7 1.4" stroke="#3b4043" stroke-width="1.9" fill="none" stroke-linejoin="miter"/></svg></div>
<div id="tr24" class="t" style="left:58.5px;top:384.69px;font-size:11px;line-height:15px;color:#000;letter-spacing:-0.095px;"><span id="tr24_p">e) Určenie ocenenia finančných nástrojov alebo</span> majetku</div>
<div class="hd" style="left:36px;top:408px;width:7px"></div>
<div class="cb" style="left:44px;top:401px"><svg width="11" height="11" viewBox="0 0 11 11"><path d="M2.3 5.4L4.8 8.3L8.7 1.4" stroke="#3b4043" stroke-width="1.9" fill="none" stroke-linejoin="miter"/></svg></div>
<div id="tr25" class="t" style="left:58.5px;top:400.69px;font-size:11px;line-height:15px;color:#000;letter-spacing:-0.085px;">f) Stanovenie metódy vlastného imania</div>
<div class="hd" style="left:36px;top:424px;width:7px"></div>
<div class="cb" style="left:44px;top:417px"><svg width="11" height="11" viewBox="0 0 11 11"><path d="M2.3 5.4L4.8 8.3L8.7 1.4" stroke="#3b4043" stroke-width="1.9" fill="none" stroke-linejoin="miter"/></svg></div>
<div id="tr26" class="t" style="left:58.5px;top:416.69px;font-size:11px;line-height:15px;color:#000;letter-spacing:-0.161px;"><span id="tr26_p">g ) Spôsob zostavenia odpisového plánu pre</span> dlhodobý</div>
<div class="hd" style="left:36px;top:440px;width:7px"></div>
<div class="cb" style="left:44px;top:433px"><svg width="11" height="11" viewBox="0 0 11 11"><path d="M2.3 5.4L4.8 8.3L8.7 1.4" stroke="#3b4043" stroke-width="1.9" fill="none" stroke-linejoin="miter"/></svg></div>
<div id="tr27" class="t" style="left:58.5px;top:432.69px;font-size:11px;line-height:15px;color:#000;letter-spacing:-0.052px;">h) Dotácie poskytnuté na obstaranie majetku</div>
<div class="hd" style="left:17px;top:456px;width:7px"></div>
<div class="cb" style="left:25px;top:449px"><svg width="11" height="11" viewBox="0 0 11 11"><path d="M2.3 5.4L4.8 8.3L8.7 1.4" stroke="#3b4043" stroke-width="1.9" fill="none" stroke-linejoin="miter"/></svg></div>
<div id="tr28" class="t" style="left:40px;top:448.69px;font-size:11px;line-height:15px;color:#000;letter-spacing:-0.079px;"><span id="tr28_p">(5) Opravy významných chýb minulých účtovných</span> období</div>
<div class="hd" style="left:17px;top:472px;width:7px"></div>
<div class="cb" style="left:25px;top:465px"></div>
<div id="tr29" class="t" style="left:40px;top:464.69px;font-size:11px;line-height:15px;color:#000;letter-spacing:-0.090px;"><span id="tr29_p">(5) Opravy nevýznamných chýb minulých účtovných</span> období</div>
<div class="hd" style="left:4px;top:488px;width:1px"></div>
<div class="cb" style="left:6px;top:481px"><svg width="11" height="11" viewBox="0 0 11 11"><path d="M2.3 5.4L4.8 8.3L8.7 1.4" stroke="#3b4043" stroke-width="1.9" fill="none" stroke-linejoin="miter"/></svg></div>
<div id="tr30" class="t" style="left:21px;top:480.69px;font-size:11px;line-height:15px;color:#000;letter-spacing:0.051px;"><span id="tr30_p">Čl. IV Informácie, ktoré vysvetľujú a doplňujú súvahu</span> a výkaz</div>
<div class="hd" style="left:17px;top:504px;width:7px"></div>
<div class="cb" style="left:25px;top:497px"><svg width="11" height="11" viewBox="0 0 11 11"><path d="M2.3 5.4L4.8 8.3L8.7 1.4" stroke="#3b4043" stroke-width="1.9" fill="none" stroke-linejoin="miter"/></svg></div>
<div id="tr31" class="t" style="left:40px;top:496.69px;font-size:11px;line-height:15px;color:#000;letter-spacing:-0.054px;"><span id="tr31_p">(1) Informácie o nehmotnom majetku, ktorý je goodwill</span> a</div>
<div class="hd" style="left:17px;top:520px;width:7px"></div>
<div class="cb" style="left:25px;top:513px"><svg width="11" height="11" viewBox="0 0 11 11"><path d="M2.3 5.4L4.8 8.3L8.7 1.4" stroke="#3b4043" stroke-width="1.9" fill="none" stroke-linejoin="miter"/></svg></div>
<div id="tr32" class="t" style="left:40px;top:512.69px;font-size:11px;line-height:15px;color:#000;letter-spacing:-0.024px;"><span id="tr32_p">(2) Informácie o významných položkách derivátov,</span> majetku</div>
<div class="hd" style="left:17px;top:536px;width:7px"></div>
<div class="cb" style="left:25px;top:529px"><svg width="11" height="11" viewBox="0 0 11 11"><path d="M2.3 5.4L4.8 8.3L8.7 1.4" stroke="#3b4043" stroke-width="1.9" fill="none" stroke-linejoin="miter"/></svg></div>
<div id="tr33" class="t" style="left:40px;top:528.69px;font-size:11px;line-height:15px;color:#000;letter-spacing:-0.122px;">(3) Informácie o záväzkoch</div>
<div class="hd" style="left:17px;top:552px;width:7px"></div>
<div class="cb" style="left:25px;top:545px"><svg width="11" height="11" viewBox="0 0 11 11"><path d="M2.3 5.4L4.8 8.3L8.7 1.4" stroke="#3b4043" stroke-width="1.9" fill="none" stroke-linejoin="miter"/></svg></div>
<div id="tr34" class="t" style="left:40px;top:544.69px;font-size:11px;line-height:15px;color:#000;letter-spacing:-0.100px;">(4) Informácie o vlastných akciách</div>
<div class="hd" style="left:17px;top:568px;width:7px"></div>
<div class="cb" style="left:25px;top:561px"><svg width="11" height="11" viewBox="0 0 11 11"><path d="M2.3 5.4L4.8 8.3L8.7 1.4" stroke="#3b4043" stroke-width="1.9" fill="none" stroke-linejoin="miter"/></svg></div>
<div id="tr35" class="t" style="left:40px;top:560.69px;font-size:11px;line-height:15px;color:#000;letter-spacing:-0.003px;"><span id="tr35_p">(5) Informácie o vytvorení kapitálového fondu</span> z príspevkov</div>
<div class="hd" style="left:17px;top:584px;width:7px"></div>
<div class="cb" style="left:25px;top:577px"><svg width="11" height="11" viewBox="0 0 11 11"><path d="M2.3 5.4L4.8 8.3L8.7 1.4" stroke="#3b4043" stroke-width="1.9" fill="none" stroke-linejoin="miter"/></svg></div>
<div id="tr36" class="t" style="left:40px;top:576.69px;font-size:11px;line-height:15px;color:#000;letter-spacing:-0.106px;"><span id="tr36_p">(6) Informácie o položkách nákladov alebo výnosov</span> výnimočného</div>
<div class="hd" style="left:4px;top:600px;width:1px"></div>
<div class="cb" style="left:6px;top:593px"><svg width="11" height="11" viewBox="0 0 11 11"><path d="M2.3 5.4L4.8 8.3L8.7 1.4" stroke="#3b4043" stroke-width="1.9" fill="none" stroke-linejoin="miter"/></svg></div>
<div id="tr37" class="t" style="left:21px;top:592.69px;font-size:11px;line-height:15px;color:#000;letter-spacing:-0.167px;">Čl. V Informácie o iných aktívach a iných pasívach</div>
<div class="hd" style="left:23px;top:616px;width:1px"></div>
<svg class="a" style="left:9px;top:611px" width="11" height="9" viewBox="0 0 11 9"><path d="M1.3 2.2L5.3 6.2L9.3 2.2" stroke="#262626" stroke-width="1.3" fill="none"/></svg>
<div class="cb" style="left:25px;top:609px"><svg width="11" height="11" viewBox="0 0 11 11"><path d="M2.3 5.4L4.8 8.3L8.7 1.4" stroke="#3b4043" stroke-width="1.9" fill="none" stroke-linejoin="miter"/></svg></div>
<div id="tr38" class="t" style="left:40px;top:608.69px;font-size:11px;line-height:15px;color:#000;letter-spacing:-0.161px;">(1) Informácie o podmienenom majetku a záväzkoch</div>
<div class="hd" style="left:36px;top:632px;width:7px"></div>
<div class="cb" style="left:44px;top:625px"><svg width="11" height="11" viewBox="0 0 11 11"><path d="M2.3 5.4L4.8 8.3L8.7 1.4" stroke="#3b4043" stroke-width="1.9" fill="none" stroke-linejoin="miter"/></svg></div>
<div id="tr39" class="t" style="left:58.5px;top:624.69px;font-size:11px;line-height:15px;color:#000;letter-spacing:-0.145px;">a) Opis a hodnota podmieneného majetku</div>
<div class="vd" style="left:15px;top:16px;height:48px"></div>
<div class="vd" style="left:15px;top:80px;height:73px"></div>
<div class="vd" style="left:34px;top:80px;height:57px"></div>
<div class="vd" style="left:15px;top:176px;height:57px"></div>
<div class="vd" style="left:15px;top:256px;height:48px"></div>
<div class="vd" style="left:15px;top:320px;height:153px"></div>
<div class="vd" style="left:34px;top:320px;height:121px"></div>
<div class="vd" style="left:15px;top:496px;height:89px"></div>
<div class="vd" style="left:15px;top:624px;height:12px"></div>
<div class="vd" style="left:34px;top:624px;height:12px"></div>
</div>
<div class="a" style="left:314px;top:134px;width:17px;height:632px;background:linear-gradient(90deg,#e9e9e9 0%,#f6f6f6 35%,#fbfbfb 100%)"></div>
<svg class="a" style="left:314px;top:134px" width="17" height="17" viewBox="0 0 17 17"><path d="M4 10.5L8.5 6L13 10.5Z" fill="#5a5a5a"/></svg>
<svg class="a" style="left:314px;top:749px" width="17" height="17" viewBox="0 0 17 17"><path d="M4 6.5L8.5 11L13 6.5Z" fill="#5a5a5a"/></svg>
<div class="a" style="left:315px;top:152px;width:15px;height:393px;box-sizing:border-box;border:1px solid #b4b9c3;border-radius:2px;background:linear-gradient(90deg,#f5f5f5 0%,#ececec 50%,#e2e2e2 100%);box-shadow:inset 0 0 0 1px #fbfbfb"></div>
<div class="a" style="left:319px;top:345px;width:7px;height:1px;background:#8a8c90;box-shadow:0 1px 0 #fafafa"></div>
<div class="a" style="left:319px;top:347px;width:7px;height:1px;background:#8a8c90;box-shadow:0 1px 0 #fafafa"></div>
<div class="a" style="left:319px;top:349px;width:7px;height:1px;background:#8a8c90;box-shadow:0 1px 0 #fafafa"></div>
<div class="a" style="left:319px;top:351px;width:7px;height:1px;background:#8a8c90;box-shadow:0 1px 0 #fafafa"></div>
<div class="a" style="left:7px;top:766px;width:307px;height:17px;background:linear-gradient(180deg,#e9e9e9 0%,#f6f6f6 35%,#fbfbfb 100%)"></div>
<div class="a" style="left:314px;top:766px;width:17px;height:17px;background:#e9edf1"></div>
<svg class="a" style="left:7px;top:766px" width="17" height="17" viewBox="0 0 17 17"><path d="M11 4L6 8.5L11 13Z" fill="#555"/></svg>
<svg class="a" style="left:297px;top:766px" width="17" height="17" viewBox="0 0 17 17"><path d="M6.5 4L11 8.5L6.5 13Z" fill="#5a5a5a"/></svg>
<div class="a" style="left:29px;top:767px;width:97px;height:15px;box-sizing:border-box;border:1px solid #b4b9c3;border-radius:2px;background:linear-gradient(180deg,#f5f5f5 0%,#ececec 50%,#e2e2e2 100%);box-shadow:inset 0 0 0 1px #fbfbfb"></div>
<div class="a" style="left:74px;top:771px;width:1px;height:7px;background:#8a8c90;box-shadow:1px 0 0 #fafafa"></div>
<div class="a" style="left:76px;top:771px;width:1px;height:7px;background:#8a8c90;box-shadow:1px 0 0 #fafafa"></div>
<div class="a" style="left:78px;top:771px;width:1px;height:7px;background:#8a8c90;box-shadow:1px 0 0 #fafafa"></div>
<div class="a" style="left:80px;top:771px;width:1px;height:7px;background:#8a8c90;box-shadow:1px 0 0 #fafafa"></div>
<div class="a" style="left:333px;top:131px;width:2px;height:655px;background:#a6a6a6"></div>
<div class="a" style="left:337px;top:133px;width:1px;height:653px;background:#b2b2b2"></div>
<div class="a" style="left:342px;top:133px;width:802px;height:651px;background:#f0f0f0;box-shadow:inset -1px -1px 0 #f5f5f5;border-bottom-right-radius:3px"></div>
<div class="a" style="left:341px;top:133px;width:805px;height:653px;box-sizing:border-box;border-right:2px solid #a0a0a0;border-bottom:2px solid #a0a0a0;border-bottom-right-radius:7px;"></div>
<div class="a" style="left:338px;top:784px;width:4px;height:2px;background:#fff;clip-path:polygon(0 0,100% 0,50% 100%,0 100%)"></div>
<div class="a" style="left:338px;top:187px;width:806px;height:1px;background:#a0a0a0"></div>
<div class="a" style="left:338px;top:188px;width:806px;height:1px;background:#fff"></div>
<div id="fh" class="t" style="left:663.6px;top:136.94px;font-size:12px;line-height:17px;font-weight:bold;-webkit-text-stroke:0.3px currentColor;color:#000;letter-spacing:0.267px;">Čl. I Všeobecné informácie</div>
<div class="a" style="left:347px;top:194px;width:750px;height:26px;background:#ffffe1"></div>
<div id="fi1" class="t" style="left:346.7px;top:193.69px;font-size:11px;line-height:15px;color:#000;letter-spacing:-0.096px;">Do zostavy môžete načítať kontaktné údaje vašej spoločnosti a údaje o hospodárskom roku. Tlačidlom Východzie údaje agendy prevezmete kontaktné údaje</div>
<div id="fi2" class="t" style="left:346.7px;top:206.69px;font-size:11px;line-height:15px;color:#000;letter-spacing:-0.098px;">vašej spoločnosti. Zaokrúhlenie údajov uvedených v poznámkach je na celé eurá.</div>
<div id="f1" class="t" style="left:714px;top:231.69px;font-size:11px;line-height:15px;font-weight:bold;-webkit-text-stroke:0.3px currentColor;color:#000;letter-spacing:-0.422px;">POZNÁMKY</div>
<div id="f2" class="t" style="left:549px;top:254.69px;font-size:11px;line-height:15px;font-weight:bold;-webkit-text-stroke:0.3px currentColor;color:#000;letter-spacing:0.535px;">individuálnej účtovnej závierky zostavenej k</div>
<div id="f3" class="t" style="left:347.4px;top:277.69px;font-size:11px;line-height:15px;font-weight:bold;-webkit-text-stroke:0.3px currentColor;color:#000;letter-spacing:0.363px;">(1) Názov a sídlo</div>
<div id="f4" class="t" style="left:347.3px;top:300.69px;font-size:11px;line-height:15px;font-weight:bold;-webkit-text-stroke:0.3px currentColor;color:#000;letter-spacing:0.510px;">Obchodné meno (názov) účtovnej jednotky</div>
<div id="f5" class="t" style="left:347.3px;top:383.69px;font-size:11px;line-height:15px;font-weight:bold;-webkit-text-stroke:0.3px currentColor;color:#000;letter-spacing:0.447px;">Sídlo účtovnej jednotky</div>
<div id="f6" class="t" style="left:347.3px;top:402.69px;font-size:11px;line-height:15px;font-weight:bold;-webkit-text-stroke:0.3px currentColor;color:#000;letter-spacing:0.042px;">Ulica a číslo</div>
<div id="f7" class="t" style="left:347.3px;top:452.69px;font-size:11px;line-height:15px;font-weight:bold;-webkit-text-stroke:0.3px currentColor;color:#000;letter-spacing:-0.963px;">PSČ</div>
<div id="f8" class="t" style="left:452.3px;top:452.69px;font-size:11px;line-height:15px;font-weight:bold;-webkit-text-stroke:0.3px currentColor;color:#000;letter-spacing:0.240px;">Názov obce</div>
<div id="f9" class="t" style="left:347.3px;top:508.69px;font-size:11px;line-height:15px;font-weight:bold;-webkit-text-stroke:0.3px currentColor;color:#000;letter-spacing:-0.231px;">IČO</div>
<div id="f10" class="t" style="left:452.3px;top:508.69px;font-size:11px;line-height:15px;font-weight:bold;-webkit-text-stroke:0.3px currentColor;color:#000;letter-spacing:0.373px;">DIČ</div>
<div id="f11" class="t" style="left:557.4px;top:508.69px;font-size:11px;line-height:15px;font-weight:bold;-webkit-text-stroke:0.3px currentColor;color:#000;letter-spacing:-0.535px;">Kód SK NACE</div>
<div id="f12" class="t" style="left:347.3px;top:564.69px;font-size:11px;line-height:15px;font-weight:bold;-webkit-text-stroke:0.3px currentColor;color:#000;letter-spacing:0.182px;">Číslo telefónu</div>
<div id="f13" class="t" style="left:547.3px;top:564.69px;font-size:11px;line-height:15px;font-weight:bold;-webkit-text-stroke:0.3px currentColor;color:#000;letter-spacing:0.080px;">Číslo faxu</div>
<div id="f14" class="t" style="left:347.3px;top:610.69px;font-size:11px;line-height:15px;font-weight:bold;-webkit-text-stroke:0.3px currentColor;color:#000;letter-spacing:0.440px;">E-mailová adresa</div>
<div class="inp" style="left:813px;top:256px;width:118px;height:20px"></div>
<div id="i0" class="t" style="left:843.2px;top:257.69px;font-size:11px;line-height:15px;color:#000;letter-spacing:0.037px;">31.12.2025</div>
<div class="inp" style="left:348px;top:325px;width:788px;height:20px"></div>
<div id="i1" class="t" style="left:349.5px;top:326.69px;font-size:11px;line-height:15px;color:#000;letter-spacing:-0.146px;">DEMO Podvojné účtovníctvo (sklad A)</div>
<div class="inp" style="left:348px;top:348px;width:788px;height:20px"></div>
<div class="inp" style="left:348px;top:427px;width:788px;height:20px"></div>
<div id="i2" class="t" style="left:349.5px;top:428.69px;font-size:11px;line-height:15px;color:#000;letter-spacing:-0.201px;">Plynárenská 7/C</div>
<div class="inp" style="left:348px;top:473px;width:98px;height:20px"></div>
<div id="i3" class="t" style="left:350px;top:474.69px;font-size:11px;line-height:15px;color:#000;letter-spacing:-0.298px;">82109</div>
<div class="inp" style="left:453px;top:473px;width:683px;height:20px"></div>
<div id="i4" class="t" style="left:454.4px;top:474.69px;font-size:11px;line-height:15px;color:#000;letter-spacing:-0.233px;">Bratislava</div>
<div class="inp" style="left:348px;top:529px;width:98px;height:20px"></div>
<div id="i5" class="t" style="left:350px;top:530.69px;font-size:11px;line-height:15px;color:#000;letter-spacing:-0.136px;">01234567</div>
<div class="inp" style="left:453px;top:529px;width:98px;height:20px"></div>
<div id="i6" class="t" style="left:456px;top:530.69px;font-size:11px;line-height:15px;color:#000;letter-spacing:-0.399px;">1020202020</div>
<div class="inp" style="left:558px;top:529px;width:28px;height:20px"></div>
<div class="inp" style="left:603px;top:529px;width:28px;height:20px"></div>
<div class="inp" style="left:648px;top:529px;width:28px;height:20px"></div>
<div class="a" style="left:593px;top:541px;width:1px;height:2px;background:#2a2a48"></div>
<div class="a" style="left:638px;top:541px;width:1px;height:2px;background:#2a2a48"></div>
<div class="inp" style="left:348px;top:585px;width:48px;height:20px"></div>
<div id="i7" class="t" style="left:350px;top:586.69px;font-size:11px;line-height:15px;color:#000;letter-spacing:-0.850px;">02</div>
<div class="inp" style="left:413px;top:585px;width:138px;height:20px"></div>
<div id="i8" class="t" style="left:415px;top:586.69px;font-size:11px;line-height:15px;color:#000;letter-spacing:-0.279px;">49212345</div>
<div class="inp" style="left:558px;top:585px;width:48px;height:20px"></div>
<div id="i9" class="t" style="left:559.4px;top:586.69px;font-size:11px;line-height:15px;color:#000;letter-spacing:-0.050px;">02</div>
<div class="inp" style="left:623px;top:585px;width:138px;height:20px"></div>
<div id="i10" class="t" style="left:625px;top:586.69px;font-size:11px;line-height:15px;color:#000;letter-spacing:-0.222px;">49212333</div>
<svg class="a" style="left:400px;top:584px" width="8" height="15" viewBox="0 0 8 15"><path d="M2.1 13L6 2.2" stroke="#141430" stroke-width="1.1" fill="none"/></svg>
<svg class="a" style="left:610px;top:584px" width="8" height="15" viewBox="0 0 8 15"><path d="M2.1 13L6 2.2" stroke="#141430" stroke-width="1.1" fill="none"/></svg>
<div class="inp" style="left:348px;top:631px;width:788px;height:20px"></div>
<div id="i11" class="t" style="left:350px;top:632.69px;font-size:11px;line-height:15px;color:#000;letter-spacing:-0.392px;">demo@demopu.sk</div>
<div class="a" style="left:342px;top:767px;width:802px;height:1px;background:#fff"></div>
<div class="a" style="left:358px;top:775px;width:761px;height:2px;background:#7f7f7f;border-radius:1px"></div>
</body></html>
